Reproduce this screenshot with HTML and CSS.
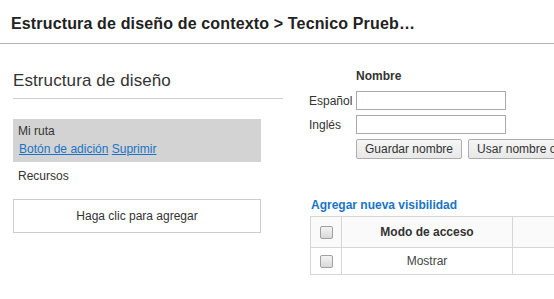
FILE: index.html
```html
<!DOCTYPE html>
<html lang="es">
<head>
    <meta charset="UTF-8">
    <meta name="viewport" content="width=device-width, initial-scale=1.0">
    <title>Estructura de diseño de contexto</title>
    <link rel="stylesheet" href="styles.css">
</head>
<body>
    <div class="page-header">
        <h1>Estructura de diseño de contexto &gt; Tecnico Prueb…</h1>
    </div>

    <div class="main">
        <div class="left-col">
            <h2 class="section-title">Estructura de diseño</h2>

            <div class="route-box">
                <div class="route-name">Mi ruta</div>
                <div class="route-links">
                    <a href="#">Botón de adición</a> <a href="#">Suprimir</a>
                </div>
            </div>

            <div class="resources-label">Recursos</div>
            <div class="add-box">Haga clic para agregar</div>
        </div>

        <div class="right-col">
            <div class="name-form">
                <span></span>
                <div class="name-title">Nombre</div>

                <label for="name-es">Español</label>
                <input type="text" id="name-es">

                <label for="name-en">Inglés</label>
                <input type="text" id="name-en">

                <span></span>
                <div class="form-buttons">
                    <button>Guardar nombre</button>
                    <button>Usar nombre original</button>
                </div>
            </div>

            <a href="#" class="add-visibility">Agregar nueva visibilidad</a>

            <table class="visibility-table">
                <thead>
                    <tr>
                        <th class="check-cell"><input type="checkbox"></th>
                        <th class="mode-cell">Modo de acceso</th>
                        <th class="extra-cell"></th>
                    </tr>
                </thead>
                <tbody>
                    <tr>
                        <td class="check-cell"><input type="checkbox"></td>
                        <td class="mode-cell">Mostrar</td>
                        <td class="extra-cell"></td>
                    </tr>
                </tbody>
            </table>
        </div>
    </div>
</body>
</html>
```

FILE: styles.css
```css
* {
    margin: 0;
    padding: 0;
    box-sizing: border-box;
}

body {
    font-family: 'Liberation Sans', Arial, sans-serif;
    font-size: 12px;
    line-height: 14px;
    color: #333;
    background: white;
    overflow: hidden;
}

.page-header {
    height: 44px;
    padding: 14px 11px 0;
    border-bottom: 1px solid #b4b4b4;
}

.page-header h1 {
    font-size: 16px;
    line-height: 20px;
    font-weight: bold;
    color: #222;
    letter-spacing: 0.15px;
    white-space: nowrap;
}

.main {
    display: flex;
}

/* Left column */
.left-col {
    flex-shrink: 0;
    width: 270px;
    margin-left: 13px;
    padding-top: 27px;
}

.section-title {
    font-size: 17px;
    line-height: 20px;
    font-weight: normal;
    color: #333;
    letter-spacing: 0.1px;
    padding-bottom: 7px;
    border-bottom: 1px solid #cfcfcf;
}

.route-box {
    width: 248px;
    margin-top: 20px;
    padding: 5px 5px 6px;
    background: #d3d3d3;
}

.route-name {
    margin-bottom: 4px;
}

.route-links {
    padding-left: 1px;
}

.route-links a {
    color: #1a74c6;
}

.resources-label {
    margin-top: 7px;
    padding-left: 5px;
}

.add-box {
    width: 248px;
    height: 34px;
    margin-top: 16px;
    border: 1px solid #cccccc;
    display: flex;
    align-items: center;
    justify-content: center;
    color: #333;
}

/* Right column */
.right-col {
    flex: 1;
    min-width: 0;
    overflow: hidden;
    margin-left: 26px;
    padding-top: 25px;
}

.name-form {
    display: grid;
    grid-template-columns: 47px auto;
    row-gap: 5px;
    align-items: center;
}

.name-title {
    font-weight: bold;
    margin-bottom: 3px;
}

.name-form input {
    width: 150px;
    height: 19px;
    border: 1px solid #a9a9a9;
    font-family: inherit;
    font-size: 12px;
}

.form-buttons {
    display: flex;
    gap: 6px;
    white-space: nowrap;
}

.form-buttons button {
    flex-shrink: 0;
    height: 20px;
    padding: 0 8px;
    font-family: inherit;
    font-size: 12px;
    color: #333;
    background: linear-gradient(#f6f6f6, #e8e8e8);
    border: 1px solid #adadad;
    border-radius: 2px;
}

.add-visibility {
    display: block;
    margin-top: 39px;
    margin-left: 2px;
    font-weight: bold;
    color: #1a74c6;
    text-decoration: none;
}

.visibility-table {
    table-layout: fixed;
    width: 322px;
    margin-top: 4px;
    margin-left: 1px;
    border-collapse: collapse;
}

.visibility-table th,
.visibility-table td {
    border: 1px solid #d6d6d6;
    text-align: center;
    vertical-align: middle;
}

.visibility-table th {
    height: 31px;
    background: #fafafa;
    font-weight: bold;
    color: #333;
}

.visibility-table td {
    height: 27px;
    color: #444;
}

.check-cell {
    width: 31px;
}

.mode-cell {
    width: 171px;
}

.extra-cell {
    width: 120px;
}

.visibility-table input[type="checkbox"] {
    appearance: none;
    -webkit-appearance: none;
    display: block;
    width: 13px;
    height: 13px;
    margin: 0 auto;
    border: 1px solid #a0a0a0;
    border-radius: 2px;
    background: linear-gradient(#f4f4f4, #d8d8d8);
}
```
